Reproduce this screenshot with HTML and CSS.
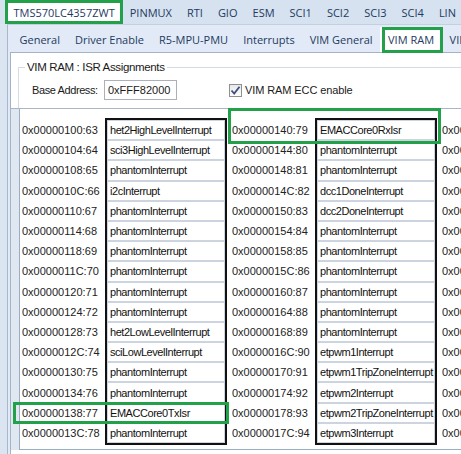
FILE: index.html
```html
<!DOCTYPE html>
<html>
<head>
<meta charset="utf-8">
<link rel="stylesheet" href="styles.css">
</head>
<body>
<div class="window">
  <nav class="tabs top">
    <span class="tab active">TMS570LC4357ZWT</span>
    <span class="tab">PINMUX</span>
    <span class="tab">RTI</span>
    <span class="tab">GIO</span>
    <span class="tab">ESM</span>
    <span class="tab">SCI1</span>
    <span class="tab">SCI2</span>
    <span class="tab">SCI3</span>
    <span class="tab">SCI4</span>
    <span class="tab">LIN</span>
  </nav>
  <div class="panel">
    <nav class="tabs sub">
      <span class="tab">General</span>
      <span class="tab">Driver Enable</span>
      <span class="tab">R5-MPU-PMU</span>
      <span class="tab">Interrupts</span>
      <span class="tab">VIM General</span>
      <span class="tab active">VIM RAM</span>
      <span class="tab">VIM Parity</span>
    </nav>
    <div class="page">
      <fieldset class="group">
        <legend>VIM RAM : ISR Assignments</legend>
        <div class="form-row">
          <span class="lbl">Base Address:</span>
          <span class="input">0xFFF82000</span>
          <span class="check">
            <span class="cbox"><svg width="11" height="11" viewBox="0 0 11 11"><path d="M1.5 5.5 L4.2 8.5 L9.5 1.8" fill="none" stroke="#3d4f7d" stroke-width="1.8"/></svg></span>
            VIM RAM ECC enable
          </span>
        </div>
      </fieldset>
      <div class="table-wrap">
        <div class="cols">
          <div class="col">
            <div class="addrs">
              <div class="addr">0x00000100:63</div>
              <div class="addr">0x00000104:64</div>
              <div class="addr">0x00000108:65</div>
              <div class="addr">0x0000010C:66</div>
              <div class="addr">0x00000110:67</div>
              <div class="addr">0x00000114:68</div>
              <div class="addr">0x00000118:69</div>
              <div class="addr">0x0000011C:70</div>
              <div class="addr">0x00000120:71</div>
              <div class="addr">0x00000124:72</div>
              <div class="addr">0x00000128:73</div>
              <div class="addr">0x0000012C:74</div>
              <div class="addr">0x00000130:75</div>
              <div class="addr">0x00000134:76</div>
              <div class="addr">0x00000138:77</div>
              <div class="addr">0x0000013C:78</div>
            </div>
            <div class="names">
              <div class="name">het2HighLevelInterrupt</div>
              <div class="name">sci3HighLevelInterrupt</div>
              <div class="name">phantomInterrupt</div>
              <div class="name">i2cInterrupt</div>
              <div class="name">phantomInterrupt</div>
              <div class="name">phantomInterrupt</div>
              <div class="name">phantomInterrupt</div>
              <div class="name">phantomInterrupt</div>
              <div class="name">phantomInterrupt</div>
              <div class="name">phantomInterrupt</div>
              <div class="name">het2LowLevelInterrupt</div>
              <div class="name">sciLowLevelInterrupt</div>
              <div class="name">phantomInterrupt</div>
              <div class="name">phantomInterrupt</div>
              <div class="name">EMACCore0TxIsr</div>
              <div class="name">phantomInterrupt</div>
            </div>
          </div>
          <div class="col">
            <div class="addrs">
              <div class="addr">0x00000140:79</div>
              <div class="addr">0x00000144:80</div>
              <div class="addr">0x00000148:81</div>
              <div class="addr">0x0000014C:82</div>
              <div class="addr">0x00000150:83</div>
              <div class="addr">0x00000154:84</div>
              <div class="addr">0x00000158:85</div>
              <div class="addr">0x0000015C:86</div>
              <div class="addr">0x00000160:87</div>
              <div class="addr">0x00000164:88</div>
              <div class="addr">0x00000168:89</div>
              <div class="addr">0x0000016C:90</div>
              <div class="addr">0x00000170:91</div>
              <div class="addr">0x00000174:92</div>
              <div class="addr">0x00000178:93</div>
              <div class="addr">0x0000017C:94</div>
            </div>
            <div class="names">
              <div class="name">EMACCore0RxIsr</div>
              <div class="name">phantomInterrupt</div>
              <div class="name">phantomInterrupt</div>
              <div class="name">dcc1DoneInterrupt</div>
              <div class="name">dcc2DoneInterrupt</div>
              <div class="name">phantomInterrupt</div>
              <div class="name">phantomInterrupt</div>
              <div class="name">phantomInterrupt</div>
              <div class="name">phantomInterrupt</div>
              <div class="name">phantomInterrupt</div>
              <div class="name">phantomInterrupt</div>
              <div class="name">etpwm1Interrupt</div>
              <div class="name">etpwm1TripZoneInterrupt</div>
              <div class="name">etpwm2Interrupt</div>
              <div class="name">etpwm2TripZoneInterrupt</div>
              <div class="name">etpwm3Interrupt</div>
            </div>
          </div>
          <div class="col">
            <div class="addrs">
              <div class="addr">0x00000180:95</div>
              <div class="addr">0x00000184:96</div>
              <div class="addr">0x00000188:97</div>
              <div class="addr">0x0000018C:98</div>
              <div class="addr">0x00000190:99</div>
              <div class="addr">0x00000194:100</div>
              <div class="addr">0x00000198:101</div>
              <div class="addr">0x0000019C:102</div>
              <div class="addr">0x000001A0:103</div>
              <div class="addr">0x000001A4:104</div>
              <div class="addr">0x000001A8:105</div>
              <div class="addr">0x000001AC:106</div>
              <div class="addr">0x000001B0:107</div>
              <div class="addr">0x000001B4:108</div>
              <div class="addr">0x000001B8:109</div>
              <div class="addr">0x000001BC:110</div>
            </div>
          </div>
        </div>
      </div>
    </div>
  </div>
  <div class="mark mark-device"></div>
  <div class="mark mark-tab"></div>
  <div class="mark mark-rx"></div>
  <div class="mark mark-tx"></div>
</div>
</body>
</html>
```

FILE: styles.css
```css
* { box-sizing: border-box; }
html, body {
  margin: 0;
  padding: 0;
  width: 461px;
  height: 454px;
  overflow: hidden;
  background: #dbe5f1;
}
.window {
  position: relative;
  width: 461px;
  height: 454px;
  overflow: hidden;
  font-family: "Liberation Sans", Arial, sans-serif;
  font-size: 11px;
  color: #1a1a1a;
}
.tabs {
  display: flex;
  white-space: nowrap;
  font-family: "Open Sans", "Noto Sans", sans-serif;
  font-size: 11px;
  color: #1e3a5f;
}
.tabs.top {
  height: 24px;
  padding-left: 6px;
  background: #d6e2f0;
}
.tabs .tab {
  display: flex;
  align-items: center;
  padding: 0 7.5px;
  flex: none;
}
.tabs .tab.active {
  background: #ffffff;
}
.panel {
  margin-left: 7px;
  border-left: 1px solid #a8b7ca;
  border-top: 1px solid #c3d0e0;
  background: #e1eaf6;
  padding-left: 2px;
  height: 430px;
}
.tabs.sub {
  height: 27px;
  padding-top: 2px;
  padding-left: 2px;
}
.tabs.sub .tab.active {
  padding: 0 8px;
}
.page {
  background: #ffffff;
  border-left: 1px solid #a3b3c7;
  border-top: 1px solid #a3b3c7;
  height: 403px;
}
.group {
  margin: 8px 0 0 7px;
  padding: 0 0 8px 13px;
  border: none;
  border-top: 1px solid #d3dbe4;
  border-left: 1px solid #d3dbe4;
  min-width: 0;
}
.group legend {
  margin-left: -7px;
  padding: 0 2px;
  font-size: 11.5px;
  color: #1a1a1a;
  letter-spacing: -0.35px;
}
.form-row {
  display: flex;
  align-items: center;
  margin-top: 7px;
  height: 20px;
}
.lbl {
  width: 72px;
  flex: none;
  letter-spacing: -0.4px;
}
.input {
  width: 73px;
  height: 20px;
  flex: none;
  border: 1px solid #abb1bb;
  padding-left: 3px;
  display: flex;
  align-items: center;
}
.check {
  display: flex;
  align-items: center;
  margin-left: 52px;
  letter-spacing: -0.1px;
}
.cbox {
  width: 13px;
  height: 13px;
  border: 1px solid #8e8f8f;
  background: linear-gradient(#e9e9e9, #fdfdfd);
  margin-right: 3px;
  display: flex;
  align-items: center;
  justify-content: center;
}
.table-wrap {
  background: #dfe7f1;
  border-top: 1px solid #aab6c5;
  padding-left: 8px;
}
.cols {
  display: flex;
  background: #ffffff;
  border-left: 1px solid #9dadc1;
  border-bottom: 1px solid #9dadc1;
  padding: 9px 0 4px 0;
  height: 341px;
}
.col {
  display: flex;
  align-items: flex-start;
  width: 210px;
  flex: none;
}
.addrs {
  width: 85px;
  flex: none;
  padding-top: 2px;
}
.addr, .name {
  height: 20.2px;
  display: flex;
  align-items: center;
  white-space: nowrap;
}
.addr {
  padding-left: 2px;
  color: #222;
}
.names {
  width: 122px;
  flex: none;
  border: 2px solid #111;
  background: #ffffff;
}
.name {
  border: 1px solid #cbd4df;
  padding-left: 2px;
  letter-spacing: -0.45px;
  overflow: hidden;
  color: #111;
}
.mark {
  position: absolute;
  border: 3px solid #23a04a;
}
.mark-device { left: 5px; top: 0; width: 118px; height: 24px; }
.mark-tab { left: 382px; top: 27px; width: 61px; height: 26px; }
.mark-rx { left: 228px; top: 108px; width: 213px; height: 36px; }
.mark-tx { left: 13px; top: 402px; width: 216px; height: 22px; }
```
